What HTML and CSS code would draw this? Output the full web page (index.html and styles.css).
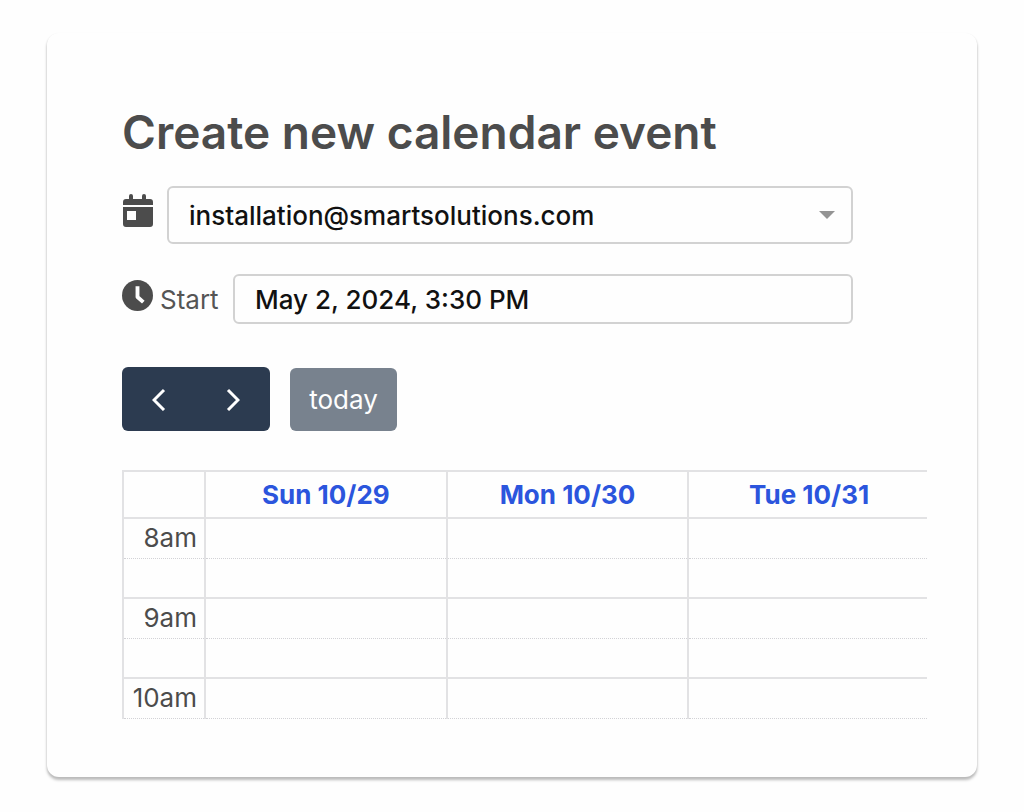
FILE: index.html
```html
<!DOCTYPE html>
<html lang="en">
<head>
<meta charset="utf-8">
<meta name="viewport" content="width=device-width, initial-scale=1">
<title>Create new calendar event</title>
<link rel="stylesheet" href="styles.css">
</head>
<body>
<main class="card">
  <h1 class="title">Create new calendar event</h1>
  <form class="form">
    <div class="field">
      <label class="field-label" for="calendar" aria-label="Calendar">
        <svg class="calendar-icon" viewBox="0 0 30 34" aria-hidden="true">
          <path fill="currentColor" d="M0 11V8q0-3 3-3h3V2q0-2 2-2t2 2v3h9V2q0-2 2-2t2 2v3h4q3 0 3 3v3zM0 13h30v17q0 3-3 3H3q-3 0-3-3zM4 17v9h9v-9z" fill-rule="evenodd"/>
        </svg>
      </label>
      <div class="select-wrap">
        <select class="control select" id="calendar">
          <option>installation@smartsolutions.com</option>
        </select>
        <svg class="caret" viewBox="0 0 16 8" aria-hidden="true"><path fill="currentColor" d="M0 0h16L8 8z"/></svg>
      </div>
    </div>
    <div class="field">
      <label class="field-label start-label" for="start">
        <svg class="clock-icon" viewBox="0 0 32 32" aria-hidden="true">
          <circle cx="16" cy="16" r="16" fill="currentColor"/>
          <path d="M16 8.500v9l4.500 4" fill="none" stroke="#fff" stroke-width="4" stroke-linecap="square" stroke-linejoin="round"/>
        </svg>
        Start
      </label>
      <input class="control start" id="start" type="text" value="May 2, 2024, 3:30 PM">
    </div>
  </form>
  <div class="toolbar">
    <div class="nav">
      <button class="nav-button" type="button" aria-label="Previous">
        <svg class="chevron" viewBox="0 0 14 24" aria-hidden="true"><path d="M12 3 2 13l10 10"/></svg>
      </button>
      <button class="nav-button" type="button" aria-label="Next">
        <svg class="chevron" viewBox="0 0 14 24" aria-hidden="true"><path d="m2 3 10 10L2 23"/></svg>
      </button>
    </div>
    <button class="today" type="button">today</button>
  </div>
  <div class="schedule">
    <table class="grid">
      <thead>
        <tr><th class="time"></th><th>Sun 10/29</th><th>Mon 10/30</th><th>Tue 10/31</th></tr>
      </thead>
      <tbody>
        <tr class="hour"><td class="time">8am</td><td></td><td></td><td></td></tr>
        <tr class="half"><td class="time"></td><td></td><td></td><td></td></tr>
        <tr class="hour"><td class="time">9am</td><td></td><td></td><td></td></tr>
        <tr class="half"><td class="time"></td><td></td><td></td><td></td></tr>
        <tr class="hour"><td class="time">10am</td><td></td><td></td><td></td></tr>
      </tbody>
    </table>
  </div>
</main>
</body>
</html>
```
FILE: styles.css
```css
* {
  box-sizing: border-box;
}

body {
  margin: 0;
  padding: 33px 47px 34px;
  background: #fefefe;
  color: #4c4c4c;
  font-family: Inter, "Liberation Sans", sans-serif;
  font-size: 26px;
}

button,
input,
select {
  font: inherit;
}

.card {
  padding: 71px 50px 58px 75px;
  border-radius: 12px;
  background: #fefefe;
  box-shadow: 0 3px 3px #bbb, 0 1px 2px #ddd;
}

.title {
  margin: 0;
  font-size: 46px;
  font-weight: 600;
  line-height: 56px;
}

.form {
  display: grid;
  gap: 30px;
  margin: 26px 74px 0 0;
}

.field {
  display: flex;
  align-items: center;
}

.field-label {
  display: flex;
  flex: none;
  align-items: center;
  width: 45px;
  height: 48px;
}

.start-label {
  gap: 7px;
  width: 111px;
  color: #555;
}

.calendar-icon {
  width: 30px;
  height: 34px;
  margin: 0 0 8px 1px;
}

.clock-icon {
  width: 31px;
  height: 31px;
  margin-bottom: 8px;
  color: #4c4c4c;
}

.select-wrap {
  position: relative;
  flex: 1;
}

.control {
  display: block;
  width: 100%;
  min-width: 0;
  height: 50px;
  padding: 0 20px;
  border: 2px solid #d2d2d2;
  border-radius: 6px;
  background: #fefefe;
  color: #111;
  font-weight: 500;
}

.select {
  height: 58px;
  appearance: none;
}

.start {
  flex: 1;
}

.caret {
  position: absolute;
  top: 25px;
  right: 18px;
  width: 16px;
  height: 8px;
  color: #949494;
  pointer-events: none;
}

.toolbar {
  display: flex;
  align-items: center;
  gap: 20px;
  margin-top: 43px;
}

.nav {
  display: flex;
  overflow: hidden;
  border-radius: 6px;
}

.nav-button {
  display: grid;
  place-items: center;
  width: 74px;
  height: 64px;
  padding: 0;
  border: 0;
  background: #2c3b50;
  color: #fff;
}

.chevron {
  width: 14px;
  height: 24px;
  fill: none;
  stroke: currentColor;
  stroke-width: 3;
}

.today {
  width: 107px;
  height: 63px;
  padding: 0;
  border: 0;
  border-radius: 6px;
  background: #78828e;
  color: #fefefe;
}

.schedule {
  overflow: hidden;
  margin-top: 39px;
}

.grid {
  width: calc(100% + 4px);
  border-collapse: collapse;
  table-layout: fixed;
}

.grid th,
.grid td {
  height: 40px;
  padding: 0;
  border: 2px solid #e2e2e4;
}

.grid th {
  height: 47px;
  color: #2b55dd;
  font-weight: 700;
  line-height: 30px;
}

.grid .time {
  width: 82px;
  padding-right: 7px;
  text-align: right;
  line-height: 30px;
}

.grid .half td {
  border-top: 1px dotted #d2d2d6;
}

.grid .hour td {
  border-bottom: 1px dotted #d2d2d6;
}
```
